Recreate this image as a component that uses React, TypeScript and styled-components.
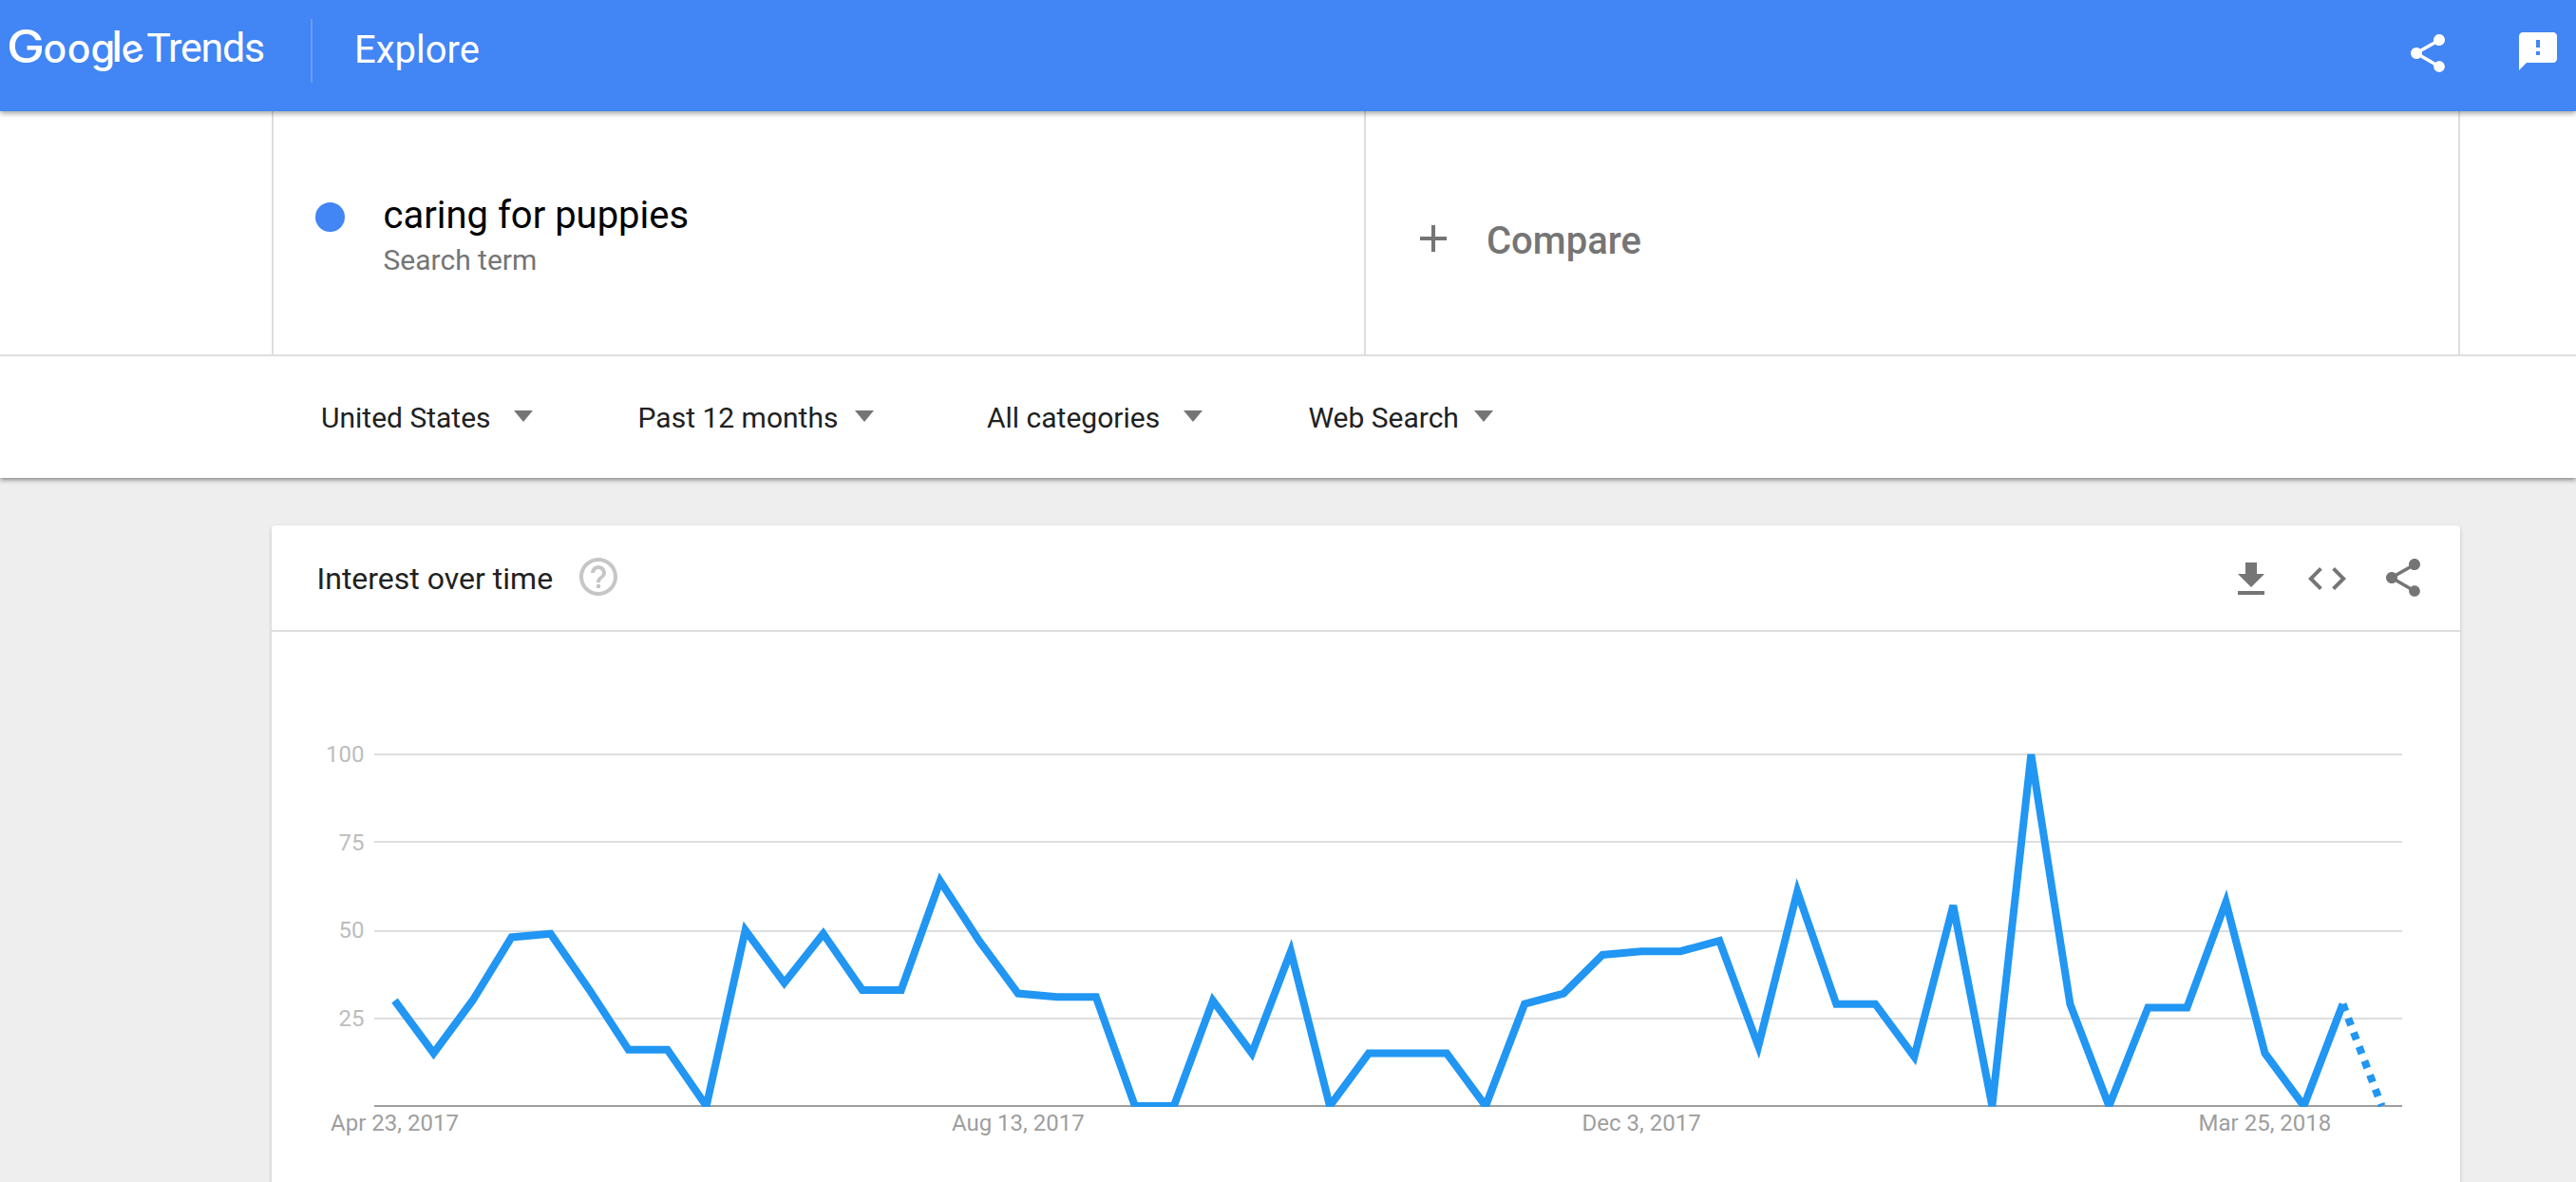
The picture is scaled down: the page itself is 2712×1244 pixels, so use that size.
import React from 'react';
import styled, { createGlobalStyle } from 'styled-components';

const GlobalStyle = createGlobalStyle`
  * {
    box-sizing: border-box;
  }

  body {
    margin: 0;
    background: #eee;
    font-family: Roboto, 'Liberation Sans', sans-serif;
    overflow: hidden;
  }
`;

const Page = styled.div`
  display: flex;
  flex-direction: column;
  height: 1244px;
  overflow: hidden;
`;

const Header = styled.header`
  position: relative;
  z-index: 3;
  display: flex;
  align-items: flex-start;
  flex: none;
  height: 117px;
  padding-right: 16px;
  background: #4285f4;
  box-shadow: 0 2px 6px rgba(0, 0, 0, 0.4);
`;

const LogoSvg = styled.svg`
  display: block;
  width: 327px;
  height: 104px;
  fill: #fff;
`;

const HeaderDivider = styled.div`
  width: 2px;
  height: 67px;
  margin-top: 20px;
  background: rgba(255, 255, 255, 0.2);
`;

const HeaderTitle = styled.h1`
  margin: 0 0 0 44px;
  font-size: 40px;
  font-weight: 400;
  line-height: 106px;
  color: #fff;
`;

const HeaderActions = styled.div`
  display: flex;
  gap: 68px;
  margin-left: auto;
  padding-top: 30px;
`;

const IconButton = styled.button<{ $color: string; $nudge?: number }>`
  display: flex;
  flex: none;
  width: 48px;
  height: 48px;
  margin: ${({ $nudge = 0 }) => `${$nudge}px 0 ${-$nudge}px`};
  padding: 0;
  border: none;
  background: none;
  color: ${({ $color }) => $color};
  cursor: pointer;

  svg {
    width: 48px;
    height: 48px;
    fill: currentColor;
  }
`;

const Terms = styled.section`
  position: relative;
  z-index: 2;
  display: grid;
  grid-template-columns: 1150px 1154px;
  flex: none;
  height: 258px;
  padding-left: 286px;
  background: #fff;
  border-bottom: 2px solid #dedede;
`;

const TermCell = styled.div`
  display: flex;
  align-items: flex-start;
  padding: 85px 0 0 44px;
  border-left: 2px solid #dedede;
`;

const TermDot = styled.span`
  width: 31px;
  height: 31px;
  margin: 11px 40.5px 0 0;
  border-radius: 50%;
  background: #4285f4;
`;

const TermName = styled.div`
  padding-top: 1px;
  font-size: 40px;
  line-height: 48px;
  color: #000;
`;

const TermType = styled.div`
  margin-top: 5px;
  font-size: 30px;
  line-height: 36px;
  color: #757575;
`;

const CompareCell = styled.div`
  display: flex;
  align-items: flex-start;
  gap: 32px;
  padding: 110px 0 0 47px;
  border-left: 2px solid #dedede;
  border-right: 2px solid #dedede;
`;

const CompareLabel = styled.span`
  padding-top: 3px;
  font-size: 40px;
  font-weight: 500;
  line-height: 48px;
  color: #757575;
`;

const Filters = styled.nav`
  position: relative;
  z-index: 1;
  display: flex;
  align-items: center;
  flex: none;
  height: 128px;
  padding-left: 338px;
  background: #fff;
  box-shadow: 0 2px 5px rgba(0, 0, 0, 0.45);
`;

const Filter = styled.div<{ $width: number }>`
  display: flex;
  align-items: center;
  width: ${({ $width }) => $width}px;
`;

const FilterLabel = styled.span<{ $width: number }>`
  width: ${({ $width }) => $width}px;
  padding-top: 2px;
  font-size: 30px;
  line-height: 36px;
  color: #212121;
  white-space: nowrap;
`;

const Caret = styled.span`
  margin-bottom: 2px;
  border: 10px solid transparent;
  border-top: 12px solid #757575;
  border-bottom: 0;
`;

const Card = styled.main`
  flex: none;
  width: 2304px;
  height: 800px;
  margin: 50px 0 0 286px;
  background: #fff;
  border-radius: 4px;
  box-shadow: 0 2px 4px rgba(0, 0, 0, 0.18);
`;

const CardHeader = styled.div`
  display: flex;
  align-items: center;
  height: 112px;
  padding: 0 36px 0 47.5px;
  border-bottom: 2px solid #dedede;
`;

const CardTitle = styled.h2`
  margin: 0 23.5px 0 0;
  padding-top: 2px;
  font-size: 32px;
  font-weight: 400;
  line-height: 38px;
  color: #212121;
`;

const CardActions = styled.div`
  display: flex;
  gap: 32px;
  margin-left: auto;
`;

const ChartSvg = styled.svg`
  display: block;
  width: 2304px;
  height: 579px;

  text {
    font-size: 24px;
  }
`;

const icons = {
  share:
    'M18 16.08c-.76 0-1.44.3-1.96.77L8.91 12.7c.05-.23.09-.46.09-.7s-.04-.47-.09-.7l7.05-4.11c.54.5 1.25.81 2.04.81 1.66 0 3-1.34 3-3s-1.34-3-3-3-3 1.34-3 3c0 .24.04.47.09.7L8.04 9.81C7.5 9.31 6.79 9 6 9c-1.66 0-3 1.34-3 3s1.34 3 3 3c.79 0 1.5-.31 2.04-.81l7.12 4.16c-.05.21-.08.43-.08.65 0 1.61 1.31 2.92 2.92 2.92s2.92-1.31 2.92-2.92-1.31-2.92-2.92-2.92z',
  feedback:
    'M20 2H4c-1.1 0-1.99.9-1.99 2L2 22l4-4h14c1.1 0 2-.9 2-2V4c0-1.1-.9-2-2-2zm-7 12h-2v-2h2v2zm0-4h-2V6h2v4z',
  add: 'M19 13h-6v6h-2v-6H5v-2h6V5h2v6h6v2z',
  help: 'M11 18h2v-2h-2v2zm1-16C6.48 2 2 6.48 2 12s4.48 10 10 10 10-4.48 10-10S17.52 2 12 2zm0 18c-4.41 0-8-3.59-8-8s3.59-8 8-8 8 3.59 8 8-3.59 8-8 8zm0-14c-2.21 0-4 1.79-4 4h2c0-1.1.9-2 2-2s2 .9 2 2c0 2-3 1.75-3 5h2c0-2.25 3-2.5 3-5 0-2.21-1.79-4-4-4z',
  download: 'M19 9h-4V3H9v6H5l7 7 7-7zM5 18v2h14v-2H5z',
  code: 'M9.4 16.6L4.8 12l4.6-4.6L8 6l-6 6 6 6 1.4-1.4zm5.2 0l4.6-4.6-4.6-4.6L16 6l6 6-6 6-1.4-1.4z',
};

interface IconProps {
  name: keyof typeof icons;
  label: string;
  color: string;
  nudge?: number;
}

const Icon: React.FC<IconProps> = ({ name, label, color, nudge }) => (
  <IconButton $color={color} $nudge={nudge} aria-label={label}>
    <svg viewBox="0 0 24 24">
      <path d={icons[name]} />
    </svg>
  </IconButton>
);

const Logo: React.FC = () => (
  <LogoSvg viewBox="0 0 327 104" aria-label="Google Trends">
    <g fontFamily="Inter, sans-serif" fontWeight={500}>
      <text transform="translate(7 65.6) scale(1.13 1)" fontSize={47.5}>G</text>
      <text x="45.4 70.8" y={65.6} fontSize={41}>oo</text>
      <text x={95.6} y={65.6} fontSize={41.5}>g</text>
      <text x={117.6} y={65.2} fontSize={45}>l</text>
      <text transform="translate(139.6 54.6) rotate(-16)" x={-11.9} y={10.9} fontSize={40}>
        e
      </text>
    </g>
    <text x={154.2} y={65.4} fontSize={43} letterSpacing={-1.25}>Trends</text>
  </LogoSvg>
);

const filters = [
  { label: 'United States', width: 333.6, labelWidth: 203 },
  { label: 'Past 12 months', width: 367.4, labelWidth: 228.5 },
  { label: 'All categories', width: 338.4, labelWidth: 207 },
  { label: 'Web Search', width: 200, labelWidth: 174.5 },
];

// weekly interest, the last week is still partial
const interest = [
  30, 15, 30, 48, 49, 33, 16, 16, 0, 50, 35, 49, 33, 33, 64, 47, 32, 31, 31, 0, 0, 30, 15, 44, 0, 15,
  15, 15, 0, 29, 32, 43, 44, 44, 47, 17, 61, 29, 29, 14, 57, 0, 100, 29, 0, 28, 28, 58, 15, 0, 29, 0,
];

const gridLines = [
  { value: 100, y: 129 },
  { value: 75, y: 221 },
  { value: 50, y: 315 },
  { value: 25, y: 407 },
];

const dateLabels = [
  { week: 0, text: 'Apr 23, 2017' },
  { week: 16, text: 'Aug 13, 2017' },
  { week: 32, text: 'Dec 3, 2017' },
  { week: 48, text: 'Mar 25, 2018' },
];

const plot = { left: 108, right: 2243, top: 129, bottom: 499 };

const weekX = (week: number) => 129.5 + week * 41.02;
const valueY = (value: number) => plot.bottom - (value / 100) * (plot.bottom - plot.top);
const toPoints = (from: number, to: number) =>
  interest
    .slice(from, to)
    .map((value, i) => `${weekX(from + i)},${valueY(value)}`)
    .join(' ');

const InterestChart: React.FC = () => {
  const last = interest.length - 1;

  return (
    <ChartSvg viewBox="0 0 2304 579">
      <defs>
        <clipPath id="plot">
          <rect x={plot.left} y={plot.top - 1} width={plot.right - plot.left} height={plot.bottom - plot.top + 2} />
        </clipPath>
      </defs>
      {gridLines.map(({ value, y }) => (
        <g key={value}>
          <line x1={plot.left} x2={plot.right} y1={y} y2={y} stroke="#dedede" strokeWidth={2} />
          <text x={97.5} y={valueY(value) + 8} textAnchor="end" fill="#bdbdbd">
            {value}
          </text>
        </g>
      ))}
      <line x1={plot.left} x2={plot.right} y1={plot.bottom} y2={plot.bottom} stroke="#9e9e9e" strokeWidth={2} />
      <g clipPath="url(#plot)" fill="none" stroke="#2196f3" strokeWidth={8}>
        <polyline points={toPoints(0, last)} />
        <polyline points={toPoints(last - 1, last + 1)} strokeDasharray="8 8" />
      </g>
      {dateLabels.map(({ week, text }) => (
        <text key={text} x={weekX(week)} y={524.5} textAnchor="middle" fill="#9e9e9e">
          {text}
        </text>
      ))}
    </ChartSvg>
  );
};

const App: React.FC = () => {
  return (
    <Page>
      <GlobalStyle />
      <Header>
        <Logo />
        <HeaderDivider />
        <HeaderTitle>Explore</HeaderTitle>
        <HeaderActions>
          <Icon name="share" label="Share" color="#fff" nudge={2} />
          <Icon name="feedback" label="Send feedback" color="#fff" />
        </HeaderActions>
      </Header>

      <Terms>
        <TermCell>
          <TermDot />
          <div>
            <TermName>caring for puppies</TermName>
            <TermType>Search term</TermType>
          </div>
        </TermCell>
        <CompareCell>
          <Icon name="add" label="Add comparison" color="#757575" />
          <CompareLabel>Compare</CompareLabel>
        </CompareCell>
      </Terms>

      <Filters>
        {filters.map(({ label, width, labelWidth }) => (
          <Filter key={label} $width={width}>
            <FilterLabel $width={labelWidth}>{label}</FilterLabel>
            <Caret />
          </Filter>
        ))}
      </Filters>

      <Card>
        <CardHeader>
          <CardTitle>Interest over time</CardTitle>
          <Icon name="help" label="Help" color="#c6c6c6" nudge={-1} />
          <CardActions>
            <Icon name="download" label="Download" color="#757575" nudge={2} />
            <Icon name="code" label="Embed" color="#757575" nudge={1} />
            <Icon name="share" label="Share chart" color="#757575" />
          </CardActions>
        </CardHeader>
        <InterestChart />
      </Card>
    </Page>
  );
};

export default App;
